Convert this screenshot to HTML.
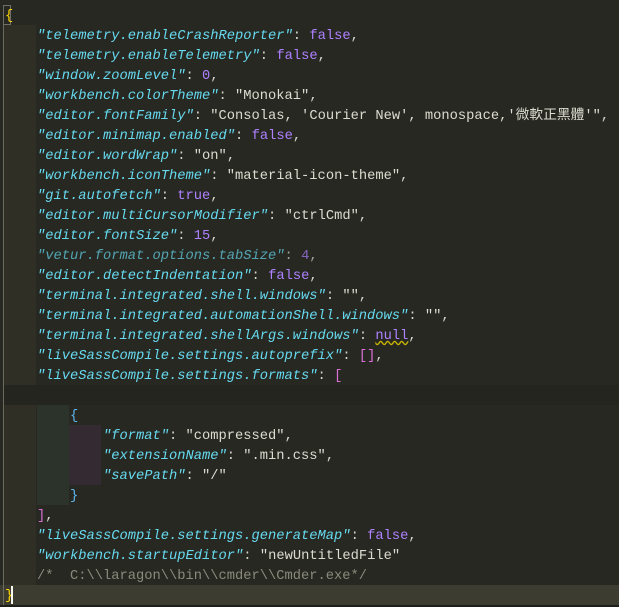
<!DOCTYPE html>
<html><head><meta charset="utf-8"><style>
html,body{margin:0;padding:0}
body{width:619px;height:607px;background:#272822;position:relative;overflow:hidden;font-family:"Liberation Mono","Noto Sans CJK TC",monospace;font-size:13.75px;}
.l{position:absolute;left:37px;height:20px;line-height:20px;white-space:pre;color:#d6d6cc;margin-top:2px}
.k{color:#66d9ef;font-style:italic}
.n{color:#ae81ff}
.s{color:#dcdcd0}
.b{color:#da70d6}
.y{color:#ffd700}
.c{color:#8a8a7c}
.blk{position:absolute}
</style></head><body>
<div class="blk" style="left:4px;top:25px;width:32px;height:560px;background:#2f2f25"></div>
<div class="blk" style="left:4px;top:385px;width:615px;height:20px;background:#25251f"></div>
<div class="blk" style="left:37px;top:405px;width:32px;height:100px;background:#2b332b"></div>
<div class="blk" style="left:69px;top:425px;width:32px;height:60px;background:#342b32"></div>
<div class="blk" style="left:0;top:585px;width:619px;height:20px;background:#3d3c31"></div>
<div class="blk" style="left:0;top:605px;width:619px;height:2px;background:#1e1f1a"></div>
<div class="blk" style="left:3px;top:5px;width:1px;height:600px;background:#6b6b60"></div>
<div class="blk" style="left:3px;top:5px;width:8px;height:20px;border:1px solid #707068;box-sizing:border-box;border-left:none"></div>
<div class="l" style="left:40px;top:-19px;color:#75715e">// Place your settings in this file to overwrite the default settings</div>
<div class="l y" style="left:5px;top:5px">{</div>
<div class="l" style="top:25px"><span class="k">"telemetry.enableCrashReporter"</span>: <span class="n">false</span>,</div>
<div class="l" style="top:45px"><span class="k">"telemetry.enableTelemetry"</span>: <span class="n">false</span>,</div>
<div class="l" style="top:65px"><span class="k">"window.zoomLevel"</span>: <span class="n">0</span>,</div>
<div class="l" style="top:85px"><span class="k">"workbench.colorTheme"</span>: <span class="s">"Monokai"</span>,</div>
<div class="l" style="top:105px"><span class="k">"editor.fontFamily"</span>: <span class="s">"Consolas, 'Courier New', monospace,'微軟正黑體'"</span>,</div>
<div class="l" style="top:125px"><span class="k">"editor.minimap.enabled"</span>: <span class="n">false</span>,</div>
<div class="l" style="top:145px"><span class="k">"editor.wordWrap"</span>: <span class="s">"on"</span>,</div>
<div class="l" style="top:165px"><span class="k">"workbench.iconTheme"</span>: <span class="s">"material-icon-theme"</span>,</div>
<div class="l" style="top:185px"><span class="k">"git.autofetch"</span>: <span class="n">true</span>,</div>
<div class="l" style="top:205px"><span class="k">"editor.multiCursorModifier"</span>: <span class="s">"ctrlCmd"</span>,</div>
<div class="l" style="top:225px"><span class="k">"editor.fontSize"</span>: <span class="n">15</span>,</div>
<div class="l" style="top:245px;opacity:.7"><span class="k">"vetur.format.options.tabSize"</span>: <span class="n">4</span>,</div>
<div class="l" style="top:265px"><span class="k">"editor.detectIndentation"</span>: <span class="n">false</span>,</div>
<div class="l" style="top:285px"><span class="k">"terminal.integrated.shell.windows"</span>: <span class="s">""</span>,</div>
<div class="l" style="top:305px"><span class="k">"terminal.integrated.automationShell.windows"</span>: <span class="s">""</span>,</div>
<div class="l" style="top:325px"><span class="k">"terminal.integrated.shellArgs.windows"</span>: <span class="n" style="text-decoration:underline wavy #c8b400">null</span>,</div>
<div class="l" style="top:345px"><span class="k">"liveSassCompile.settings.autoprefix"</span>: <span class="b">[]</span>,</div>
<div class="l" style="top:365px"><span class="k">"liveSassCompile.settings.formats"</span>: <span class="b">[</span></div>
<div class="l" style="top:405px;left:70px;color:#5fb7f0">{</div>
<div class="l" style="top:425px;left:103px"><span class="k">"format"</span>: <span class="s">"compressed"</span>,</div>
<div class="l" style="top:445px;left:103px"><span class="k">"extensionName"</span>: <span class="s">".min.css"</span>,</div>
<div class="l" style="top:465px;left:103px"><span class="k">"savePath"</span>: <span class="s">"/"</span></div>
<div class="l" style="top:485px;left:70px;color:#5fb7f0">}</div>
<div class="l" style="top:505px"><span class="b">]</span>,</div>
<div class="l" style="top:525px"><span class="k">"liveSassCompile.settings.generateMap"</span>: <span class="n">false</span>,</div>
<div class="l" style="top:545px"><span class="k">"workbench.startupEditor"</span>: <span class="s">"newUntitledFile"</span></div>
<div class="l c" style="top:565px">/*  C:\\laragon\\bin\\cmder\\Cmder.exe*/</div>
<div class="l y" style="left:5px;top:585px">}</div>
<div class="blk" style="left:11px;top:586px;width:2px;height:18px;background:#f8f8f0"></div>
</body></html>
